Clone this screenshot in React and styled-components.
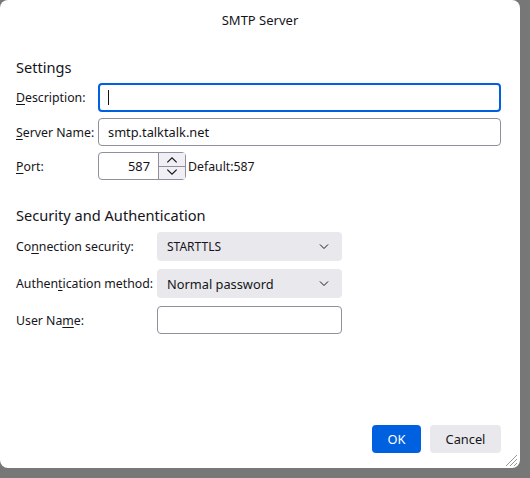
import React from "react";
import styled, { createGlobalStyle } from "styled-components";

const Global = createGlobalStyle`
html,body{margin:0;padding:0;}
body{
  background:#777777;
  font-family:"Noto Sans","Open Sans",sans-serif;
  font-size:12.3px;
  color:#15141a;
  width:530px;
  height:478px;
  overflow:hidden;
}
`;

const Dialog = styled.div`
position:relative;
width:520px;
height:468px;
background:#fff;
border-radius:8px;
display:flex;
flex-direction:column;
box-sizing:border-box;
`;

const TitleBar = styled.div`
height:40px;
display:flex;
align-items:center;
justify-content:center;
font-size:13px;
`;

const Body = styled.div`
flex:1;
padding:17px 19px 0 16px;
display:flex;
flex-direction:column;
`;

const Heading = styled.div`
font-size:14.6px;
margin-bottom:${p => p.$gap || 6}px;
`;

const Grid = styled.div`
display:grid;
grid-template-columns:${p => p.$label}px ${p => p.$field};
row-gap:${p => p.$row || 6}px;
align-items:center;
margin-bottom:${p => p.$after || 0}px;
`;

const Label = styled.label`
white-space:nowrap;
& u{text-decoration:underline;text-underline-offset:2px;}
`;

const TextBox = styled.div`
box-sizing:border-box;
height:${p => (p.$focused ? 29 : 28)}px;
border:${p => (p.$focused ? "2px solid #0061e0" : "1px solid #8f8f9d")};
border-radius:4px;
background:#fff;
display:flex;
align-items:center;
padding:0 ${p => (p.$focused ? 8 : 9)}px;
font-size:12.8px;
`;

const Caret = styled.span`
width:1px;
height:15px;
background:#15141a;
`;

const PortRow = styled.div`
display:flex;
align-items:center;
gap:2px;
`;

const PortBox = styled.div`
box-sizing:border-box;
width:88px;
height:28px;
border:1px solid #8f8f9d;
border-radius:4px;
display:flex;
align-items:stretch;
`;

const PortValue = styled.div`
flex:1;
display:flex;
align-items:center;
justify-content:flex-end;
padding-right:8px;
font-size:12.8px;
`;

const Spinner = styled.div`
width:26px;
border-left:1px solid #8f8f9d;
display:flex;
flex-direction:column;
`;

const SpinBtn = styled.div`
flex:1;
background:#f0f0f4;
display:flex;
align-items:center;
justify-content:center;
& + &{border-top:1px solid #8f8f9d;}
`;

const Select = styled.div`
box-sizing:border-box;
width:185px;
height:29px;
background:#e9e9ed;
border-radius:4px;
display:flex;
align-items:center;
justify-content:space-between;
padding:0 13px 0 10px;
font-size:${p => p.$size || 12.8}px;
`;

const PlainBox = styled.div`
box-sizing:border-box;
width:185px;
height:28px;
border:1px solid #8f8f9d;
border-radius:4px;
`;

const Footer = styled.div`
display:flex;
justify-content:flex-end;
gap:9px;
padding:0 19px 15px 0;
`;

const Button = styled.div`
height:28px;
border-radius:4px;
display:flex;
align-items:center;
justify-content:center;
width:${p => p.$w}px;
background:${p => (p.$primary ? "#0061e0" : "#e9e9ed")};
color:${p => (p.$primary ? "#fff" : "#15141a")};
font-size:12.8px;
`;

const Grip = styled.svg`
position:absolute;
right:2px;
bottom:1px;
`;

const Chevron = ({ up, size = 10 }) => (
  <svg width={size} height={size / 2 + 1} viewBox="0 0 10 6">
    <path
      d={up ? "M1 5.5 L5 1.5 L9 5.5" : "M1 0.5 L5 4.5 L9 0.5"}
      fill="none"
      stroke="#15141a"
      strokeWidth="1"
    />
  </svg>
);

export default function App() {
  return (
    <>
      <Global />
      <Dialog>
        <TitleBar>SMTP Server</TitleBar>
        <Body>
          <Heading>Settings</Heading>
          <Grid $label={82} $field="1fr" $after={25}>
            <Label><u>D</u>escription:</Label>
            <TextBox $focused><Caret /></TextBox>
            <Label><u>S</u>erver Name:</Label>
            <TextBox>smtp.talktalk.net</TextBox>
            <Label><u>P</u>ort:</Label>
            <PortRow>
              <PortBox>
                <PortValue>587</PortValue>
                <Spinner>
                  <SpinBtn><Chevron up size={12} /></SpinBtn>
                  <SpinBtn><Chevron size={12} /></SpinBtn>
                </Spinner>
              </PortBox>
              <span>Default:587</span>
            </PortRow>
          </Grid>
          <Heading $gap={7}>Security and Authentication</Heading>
          <Grid $label={141} $field="185px" $row={8}>
            <Label>Co<u>n</u>nection security:</Label>
            <Select $size={12}>STARTTLS<Chevron /></Select>
            <Label>Authen<u>t</u>ication method:</Label>
            <Select>Normal password<Chevron /></Select>
            <Label>User Na<u>m</u>e:</Label>
            <PlainBox />
          </Grid>
        </Body>
        <Footer>
          <Button $primary $w={49}>OK</Button>
          <Button $w={71}>Cancel</Button>
        </Footer>
        <Grip width="14" height="14" viewBox="0 0 14 14">
          <path d="M13 2 L2 13 M13 6 L6 13 M13 10 L10 13" stroke="#9a9a9a" strokeWidth="1" />
        </Grip>
      </Dialog>
    </>
  );
}
